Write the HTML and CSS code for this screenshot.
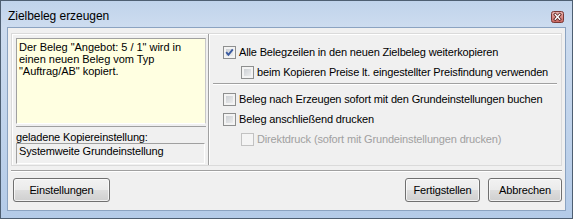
FILE: index.html
```html
<!DOCTYPE html>
<html>
<head>
<meta charset="utf-8">
<link rel="stylesheet" href="styles.css">
</head>
<body>
<div class="window">
  <div class="titlebar">
    <span class="title">Zielbeleg erzeugen</span>
    <svg class="close" width="13" height="12" viewBox="0 0 13 12">
      <defs>
        <linearGradient id="cg" x1="0" y1="0" x2="0" y2="1">
          <stop offset="0" stop-color="#eab4b0"/>
          <stop offset="1" stop-color="#c8645e"/>
        </linearGradient>
      </defs>
      <rect x="0.5" y="0.5" width="12" height="11" rx="2" fill="url(#cg)" stroke="#7b3a36"/>
      <path d="M4.3 3.6 L8.7 8.2 M8.7 3.6 L4.3 8.2" stroke="#5a2623" stroke-width="3" stroke-linecap="square"/>
      <path d="M4.3 3.6 L8.7 8.2 M8.7 3.6 L4.3 8.2" stroke="#ffffff" stroke-width="1.4" stroke-linecap="square"/>
    </svg>
  </div>
  <div class="client">
    <div class="panel">
      <div class="left">
        <div class="info">Der Beleg "Angebot: 5 / 1" wird in<br>einen neuen Beleg vom Typ<br>"Auftrag/AB" kopiert.</div>
        <div class="hr-left"></div>
        <div class="caption">geladene Kopiereinstellung:</div>
        <div class="field">Systemweite Grundeinstellung</div>
      </div>
      <div class="right">
        <div class="row">
          <span class="cb">
            <svg width="11" height="11" viewBox="0 0 11 11"><path d="M2.2 5.2 L4.4 7.8 L8.8 2.3" fill="none" stroke="#3a5aa0" stroke-width="1.9"/></svg>
          </span>
          <span>Alle Belegzeilen in den neuen Zielbeleg weiterkopieren</span>
        </div>
        <div class="row ind">
          <span class="cb"></span>
          <span>beim Kopieren Preise lt. eingestellter Preisfindung verwenden</span>
        </div>
        <div class="hr-right"></div>
        <div class="row">
          <span class="cb"></span>
          <span>Beleg nach Erzeugen sofort mit den Grundeinstellungen buchen</span>
        </div>
        <div class="row">
          <span class="cb"></span>
          <span>Beleg anschließend drucken</span>
        </div>
        <div class="row ind disabled">
          <span class="cb"></span>
          <span>Direktdruck (sofort mit Grundeinstellungen drucken)</span>
        </div>
      </div>
    </div>
    <div class="sep"></div>
    <div class="buttons">
      <button class="btn btn-settings">Einstellungen</button>
      <span class="spacer"></span>
      <button class="btn btn-finish">Fertigstellen</button>
      <button class="btn btn-cancel">Abbrechen</button>
    </div>
  </div>
</div>
</body>
</html>
```
FILE: styles.css
```css
body {
  margin: 0;
  font-family: "Liberation Sans", Arial, sans-serif;
  font-size: 11px;
  letter-spacing: -0.15px;
  color: #000;
  background: #fff;
}

.window {
  width: 573px;
  height: 219px;
  box-sizing: border-box;
  border: 1px solid #4e5f72;
  background: linear-gradient(#c0d3eb, #cddcef 26px, #b4cbe8);
  display: flex;
  flex-direction: column;
}

.titlebar {
  height: 26px;
  flex-shrink: 0;
  display: flex;
  align-items: flex-start;
}

.title {
  font-size: 12px;
  letter-spacing: -0.05px;
  line-height: 14px;
  margin: 8px 0 0 7px;
}

.close {
  display: block;
  margin: 10px 8px 0 auto;
}

.client {
  flex: 1;
  margin: 0 6px 7px 6px;
  border: 1px solid #8ba3c1;
  background: #f0f0f0;
  display: flex;
  flex-direction: column;
}

.panel {
  margin: 5px 3px 0 3px;
  height: 133px;
  box-sizing: border-box;
  border: 1px solid #dadada;
  box-shadow: inset 1px 1px 0 #fff;
  display: flex;
}

.left {
  width: 197px;
  box-sizing: border-box;
  border-right: 1px solid #a0a0a0;
  padding: 4px 0 0 4px;
}

.info {
  width: 190px;
  height: 86px;
  box-sizing: border-box;
  background: #ffffe1;
  border-top: 1px solid #a0a0a0;
  border-left: 1px solid #a0a0a0;
  border-right: 1px solid #c8c8c8;
  border-bottom: 1px solid #fff;
  padding: 2px 0 0 2px;
  line-height: 12px;
  letter-spacing: -0.03px;
}

.hr-left {
  width: 190px;
  height: 1px;
  background: #a0a0a0;
  margin-top: 2px;
}

.caption {
  margin-top: 4px;
  line-height: 12px;
}

.field {
  width: 189px;
  height: 21px;
  box-sizing: border-box;
  border-top: 1px solid #a0a0a0;
  border-left: 1px solid #a0a0a0;
  border-right: 1px solid #fff;
  border-bottom: 1px solid #fff;
  padding: 1px 0 0 2px;
  line-height: 13px;
}

.right {
  flex: 1;
  padding-top: 8px;
  display: flex;
  flex-direction: column;
  box-shadow: inset 1px 0 0 #fff;
}

.row {
  height: 20px;
  display: flex;
  align-items: center;
  padding-left: 14px;
  white-space: nowrap;
}

.row.ind {
  padding-left: 32px;
}

.cb {
  width: 13px;
  height: 13px;
  box-sizing: border-box;
  border: 1px solid #8e8f8f;
  background: linear-gradient(135deg, #c4c8cd, #f4f4f4);
  box-shadow: inset 0 0 0 2px #f3f3f3;
  margin-right: 3px;
  flex-shrink: 0;
  display: flex;
  align-items: center;
  justify-content: center;
}

.cb svg {
  display: block;
}

.disabled {
  color: #a0a0a0;
}

.disabled .cb {
  border-color: #c2c2c2;
  background: #f4f4f4;
  box-shadow: none;
}

.hr-right {
  margin: 1px 4px 5px 4px;
  height: 1px;
  background: #a0a0a0;
  box-shadow: 0 1px 0 #fff;
}

.sep {
  margin: 4px 3px 0 3px;
  height: 1px;
  background: #a0a0a0;
  box-shadow: 0 1px 0 #fff;
}

.buttons {
  display: flex;
  margin-top: 7px;
  padding: 0 3px 0 5px;
}

.spacer {
  flex: 1;
}

.btn {
  height: 24px;
  box-sizing: border-box;
  border: 1px solid #707070;
  border-radius: 3px;
  background: linear-gradient(#f2f2f2 0%, #ebebeb 48%, #dddddd 52%, #cfcfcf 100%);
  box-shadow: inset 0 0 0 1px rgba(255, 255, 255, 0.7);
  font: inherit;
  letter-spacing: inherit;
  color: #000;
  padding: 0;
}

.btn-settings {
  width: 97px;
}

.btn-finish {
  width: 75px;
  margin-right: 8px;
}

.btn-cancel {
  width: 74px;
}
```
